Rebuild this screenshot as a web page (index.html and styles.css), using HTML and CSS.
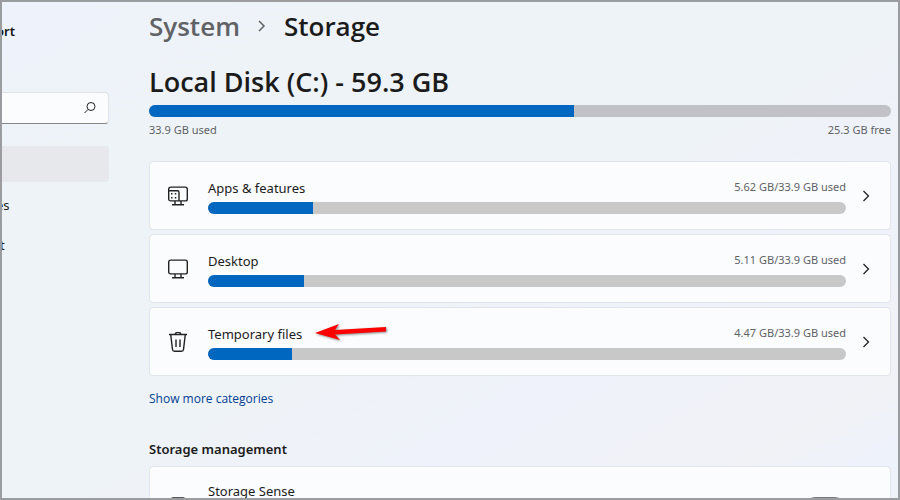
FILE: index.html
```html
<!DOCTYPE html>
<html lang="en">
<head>
    <meta charset="UTF-8">
    <meta name="viewport" content="width=device-width, initial-scale=1.0">
    <title>Storage</title>
    <link rel="stylesheet" href="styles.css">
</head>
<body>
    <div class="window">
        <aside class="sidebar">
            <div class="account cut">ort</div>
            <div class="search">
                <input type="text" aria-label="Search">
                <svg width="14" height="14" viewBox="0 0 14 14">
                    <circle cx="8" cy="5.5" r="4"/>
                    <path d="M5 8.5 1.5 12"/>
                </svg>
            </div>
            <nav>
                <a href="#" class="active" aria-label="System"></a>
                <a href="#" class="cut">es</a>
                <a href="#">t</a>
            </nav>
        </aside>
        <main>
            <div class="breadcrumb">
                <a href="#">System</a>
                <svg width="8" height="12" viewBox="0 0 8 12"><path d="M1 1 6 6 1 11"/></svg>
                <h1>Storage</h1>
            </div>

            <h2 class="disk">Local Disk (C:) - 59.3 GB</h2>
            <div class="bar total"><div class="fill" style="width: 57.3%"></div></div>
            <div class="usage">
                <span>33.9 GB used</span>
                <span>25.3 GB free</span>
            </div>

            <div class="cards">
                <a href="#" class="card">
                    <svg class="icon" width="20" height="20" viewBox="0 0 20 20">
                        <path d="M.7 4V3A1.900 1.900 0 0 1 2.600 1.100H17.400A1.900 1.900 0 0 1 19.300 3V13A1.900 1.900 0 0 1 17.400 14.900H2.600A1.900 1.900 0 0 1 .7 13V4.700H9.500A1.500 1.500 0 0 1 11 6.200V14.900M7 15V18.500M13 15V18.500M4 18.700H16"/>
                        <path class="dots" d="M3 7h1.500v1.500H3zM6.800 7h1.500v1.500H6.800zM3 11h1.500v1.500H3zM6.800 11h1.500v1.500H6.800z"/>
                    </svg>
                    <div class="details">
                        <div class="labels">
                            <span class="name">Apps &amp; features</span>
                            <span class="used">5.62 GB/33.9 GB used</span>
                        </div>
                        <div class="bar"><div class="fill" style="width: 16.5%"></div></div>
                    </div>
                    <svg class="chevron" width="8" height="12" viewBox="0 0 8 12"><path d="M1.500 1 6.500 6 1.500 11"/></svg>
                </a>
                <a href="#" class="card">
                    <svg class="icon" width="20" height="20" viewBox="0 0 20 20">
                        <rect x=".7" y="1.100" width="18.600" height="13.800" rx="1.900"/>
                        <path d="M7 15V18.500M13 15V18.500M4 18.700H16"/>
                    </svg>
                    <div class="details">
                        <div class="labels">
                            <span class="name">Desktop</span>
                            <span class="used">5.11 GB/33.9 GB used</span>
                        </div>
                        <div class="bar"><div class="fill" style="width: 15%"></div></div>
                    </div>
                    <svg class="chevron" width="8" height="12" viewBox="0 0 8 12"><path d="M1.500 1 6.500 6 1.500 11"/></svg>
                </a>
                <a href="#" class="card">
                    <svg class="icon" width="20" height="20" viewBox="0 0 20 20">
                        <path d="M1 2.500H19M7.200 2.300A2.800 2 0 0 1 12.800 2.300M2.700 2.500 4.500 17.500A2 2 0 0 0 6.500 19.300H13.500A2 2 0 0 0 15.500 17.500L17.300 2.500M8 7.500V15M12 7.500V15"/>
                    </svg>
                    <div class="details">
                        <div class="labels">
                            <span class="name">Temporary files
                                <svg class="arrow" width="74" height="20" viewBox="0 0 74 20">
                                    <path d="M1 9 25 0 21 6 72 3V7.500L21 10.500 26 16Z"/>
                                </svg>
                            </span>
                            <span class="used">4.47 GB/33.9 GB used</span>
                        </div>
                        <div class="bar"><div class="fill" style="width: 13.2%"></div></div>
                    </div>
                    <svg class="chevron" width="8" height="12" viewBox="0 0 8 12"><path d="M1.500 1 6.500 6 1.500 11"/></svg>
                </a>
            </div>
            <a href="#" class="more">Show more categories</a>

            <h3>Storage management</h3>
            <div class="card sense">
                <svg class="icon" width="20" height="20" viewBox="0 0 20 20">
                    <rect x="3" y="1" width="14" height="18" rx="2"/>
                </svg>
                <label class="name" for="sense">Storage Sense</label>
                <input type="checkbox" class="toggle" id="sense">
            </div>
        </main>
    </div>
</body>
</html>
```
FILE: styles.css
```css
* {
    box-sizing: border-box;
}
body {
    margin: 0;
    font-family: "Noto Sans", "Open Sans", sans-serif;
    font-size: 13px;
    color: #1b1b1b;
}
a {
    color: inherit;
    text-decoration: none;
}
svg {
    flex: none;
    fill: none;
    stroke: #222;
}
.window {
    display: flex;
    gap: 40px;
    height: 100vh;
    padding-right: 9px;
    overflow: hidden;
    background: linear-gradient(150deg, #eef2fb 0%, #eef3f7 25%, #eef3f7 50%, #eff2fa 70%, #f0f2f6 88%, #eef2fb 95%);
}
/* Window frame */
.window::after {
    content: "";
    position: fixed;
    inset: 0;
    border: 2px solid #9b9c9f;
    pointer-events: none;
}

/* Sidebar */
.sidebar {
    flex: none;
    width: 109px;
}
.cut {
    text-indent: -4px;
}
.account {
    padding-top: 21px;
    line-height: 20px;
    font-weight: 600;
    color: #111;
}
.search {
    display: flex;
    align-items: center;
    height: 32px;
    margin-top: 51px;
    padding-right: 11px;
    background-color: #fbfcfe;
    border: 1px solid #dfe3e8;
    border-left: none;
    border-bottom-color: #85888b;
    border-radius: 0 4px 4px 0;
}
.search input {
    flex: 1;
    min-width: 0;
    border: none;
    outline: none;
    background: none;
}
nav {
    display: flex;
    flex-direction: column;
    gap: 4px;
    margin-top: 22px;
}
nav a {
    height: 36px;
    line-height: 38px;
    border-radius: 0 4px 4px 0;
}
nav .active {
    background-color: #e6e8ec;
}

/* Content */
main {
    flex: 1;
    min-width: 0;
}
h1, h2, h3 {
    margin: 0;
    font-weight: 600;
}
.breadcrumb {
    display: flex;
    align-items: center;
    gap: 18px;
    padding-top: 8px;
    font-family: "Open Sans", sans-serif;
    font-size: 26px;
    line-height: 36px;
    font-weight: 600;
    color: #606266;
}
.breadcrumb svg {
    stroke: #606266;
    stroke-width: 1.5;
}
.breadcrumb h1 {
    font-size: 26px;
    color: #1b1b1b;
}
.disk {
    margin-top: 20px;
    font-family: "Open Sans", sans-serif;
    font-size: 27px;
    line-height: 36px;
}
.bar {
    height: 12px;
    border-radius: 6px;
    background-color: #c8c8c8;
    overflow: hidden;
}
.bar.total {
    margin-top: 5px;
    background-color: #c0c2c6;
}
.fill {
    height: 100%;
    background-color: #0067c0;
}
.usage {
    display: flex;
    justify-content: space-between;
    margin-top: 5px;
    font-size: 11px;
    line-height: 16px;
    color: #606266;
}
.cards {
    display: flex;
    flex-direction: column;
    gap: 4px;
    margin-top: 23px;
}
.card {
    display: flex;
    align-items: center;
    min-height: 69px;
    padding: 0 20px 0 18px;
    background-color: #fbfcfe;
    border: 1px solid #e1e4ea;
    border-radius: 4px;
}
.icon {
    stroke-width: 1.4;
}
.icon .dots {
    fill: #222;
    stroke: none;
}
.details {
    flex: 1;
    margin: 0 16px 0 20px;
}
.labels {
    display: flex;
    justify-content: space-between;
    margin-bottom: 4px;
    line-height: 20px;
}
.name {
    position: relative;
}
.used {
    font-size: 11px;
    line-height: 18px;
    color: #606266;
}
.chevron {
    stroke-width: 1.3;
}
.arrow {
    position: absolute;
    left: 100%;
    top: 0;
    margin-left: 12px;
    fill: #f00;
    stroke: none;
    filter: drop-shadow(1px 1px 1px #888);
}
.more {
    display: block;
    width: max-content;
    margin-top: 14px;
    font-family: "Open Sans", sans-serif;
    font-size: 12px;
    line-height: 18px;
    color: #003e92;
}
h3 {
    margin-top: 31px;
    font-size: 13px;
    line-height: 20px;
}
.sense {
    margin-top: 7px;
    align-items: flex-start;
    padding-top: 14px;
}
.sense .icon {
    margin-top: 16px;
}
.sense .name {
    flex: 1;
    margin-left: 20px;
    line-height: 20px;
}
.toggle {
    appearance: none;
    width: 40px;
    height: 20px;
    margin: 16px 25px 0 0;
    border: 1px solid #77797c;
    border-radius: 10px;
    background-color: #f3f4f6;
}
```
